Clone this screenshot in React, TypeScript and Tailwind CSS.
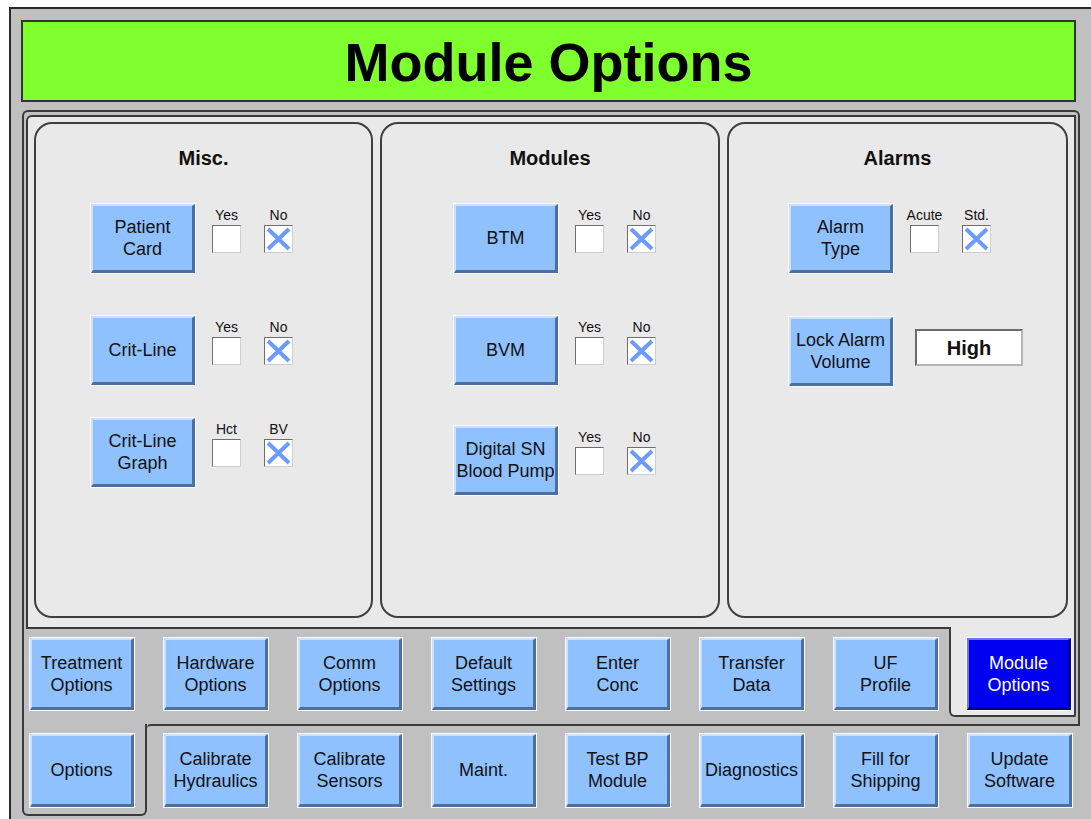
import React from "react";

const FONT = { fontFamily: '"Liberation Sans", Arial, sans-serif' };

function Btn({ lines, selected = false, h = "h-[71px]" }: { lines: string[]; selected?: boolean; h?: string }) {
  return (
    <div className={`w-[106px] ${h} shrink-0 border border-[#f7faff] flex`}>
      <div
        className={`flex-1 flex flex-col items-center justify-center text-center border-t-2 border-l-2 border-b-[3px] border-r-[3px] text-[18px] leading-[22px] ${
          selected
            ? "bg-[#0000f0] border-t-[#7070ff] border-l-[#7070ff] border-b-[#000080] border-r-[#000080] text-white"
            : "bg-[#8fc1ff] border-t-[#cbe2ff] border-l-[#cbe2ff] border-b-[#4f6e9a] border-r-[#4f6e9a] text-[#121212]"
        }`}
      >
        {lines.map((l) => (
          <div key={l} className="whitespace-nowrap">{l}</div>
        ))}
      </div>
    </div>
  );
}

function Check({ label, checked = false, first = false }: { label: string; checked?: boolean; first?: boolean }) {
  return (
    <div className={`w-[29px] shrink-0 flex flex-col items-center mt-[4px] ${first ? "ml-[16px]" : "ml-[23px]"}`}>
      <div className="h-[16px] text-[14px] leading-[16px] text-[#111] whitespace-nowrap">{label}</div>
      <div className="mt-[2px] w-[29px] h-[28px] bg-white border border-t-[#6e6e6e] border-l-[#6e6e6e] border-b-[#cfcfcf] border-r-[#cfcfcf]">
        {checked && (
          <svg viewBox="0 0 27 26" preserveAspectRatio="none" className="w-full h-full">
            <path d="M3 3 L24 23 M24 3 L3 23" stroke="#6b9bff" strokeWidth="4" />
          </svg>
        )}
      </div>
    </div>
  );
}

const row1 = [
  ["Treatment", "Options"],
  ["Hardware", "Options"],
  ["Comm", "Options"],
  ["Default", "Settings"],
  ["Enter", "Conc"],
  ["Transfer", "Data"],
  ["UF", "Profile"],
];

const row2 = [
  ["Calibrate", "Hydraulics"],
  ["Calibrate", "Sensors"],
  ["Maint."],
  ["Test BP", "Module"],
  ["Diagnostics"],
  ["Fill for", "Shipping"],
  ["Update", "Software"],
];

export default function App() {
  return (
    <div className="w-full h-[819px] bg-white overflow-hidden" style={FONT}>
      <div className="ml-[9px] mt-[7px] h-[812px] border-l-2 border-t-2 border-[#2a2a2a] bg-[#c0c0c0]">
        {/* banner */}
        <div className="ml-[10px] mt-[11px] w-[1055px] h-[82px] border-2 border-[#333] bg-[#80ff2f] flex items-center justify-center">
          <div className="text-[54px] leading-[60px] font-bold text-black pt-[2px]">Module Options</div>
        </div>

        {/* outer tab panel */}
        <div className="ml-[11px] mt-[8px] w-[1058px] border-l-2 border-t-2 border-r-2 border-[#3a3a3a] rounded-t-[6px] px-[2px] pt-[3px]">
          <div className="h-[512px] border-l-2 border-t-2 border-r-2 border-[#3a3a3a] rounded-tl-[6px] bg-[#e9e9e9] pt-[5px] px-[6px] grid grid-cols-[339px_340px_341px] gap-[7px] items-start">
            {/* Misc */}
            <div className="h-[496px] rounded-[18px] border-2 border-[#3f3f3f] flex flex-col pt-[22px]">
              <div className="text-[20px] leading-[24px] font-bold text-center text-[#111]">Misc.</div>
              <div className="pl-[54px] flex flex-col">
                <div className="mt-[33px] flex items-start">
                  <Btn lines={["Patient", "Card"]} />
                  <Check label="Yes" first />
                  <Check label="No" checked />
                </div>
                <div className="mt-[41px] flex items-start">
                  <Btn lines={["Crit-Line"]} />
                  <Check label="Yes" first />
                  <Check label="No" checked />
                </div>
                <div className="mt-[31px] flex items-start">
                  <Btn lines={["Crit-Line", "Graph"]} />
                  <Check label="Hct" first />
                  <Check label="BV" checked />
                </div>
              </div>
            </div>

            {/* Modules */}
            <div className="h-[496px] rounded-[18px] border-2 border-[#3f3f3f] flex flex-col pt-[22px]">
              <div className="text-[20px] leading-[24px] font-bold text-center text-[#111]">Modules</div>
              <div className="pl-[71px] flex flex-col">
                <div className="mt-[33px] flex items-start">
                  <Btn lines={["BTM"]} />
                  <Check label="Yes" first />
                  <Check label="No" checked />
                </div>
                <div className="mt-[41px] flex items-start">
                  <Btn lines={["BVM"]} />
                  <Check label="Yes" first />
                  <Check label="No" checked />
                </div>
                <div className="mt-[39px] flex items-start">
                  <Btn lines={["Digital SN", "Blood Pump"]} />
                  <Check label="Yes" first />
                  <Check label="No" checked />
                </div>
              </div>
            </div>

            {/* Alarms */}
            <div className="h-[496px] rounded-[18px] border-2 border-[#3f3f3f] flex flex-col pt-[22px]">
              <div className="text-[20px] leading-[24px] font-bold text-center text-[#111]">Alarms</div>
              <div className="pl-[59px] flex flex-col">
                <div className="mt-[33px] flex items-start">
                  <Btn lines={["Alarm", "Type"]} />
                  <Check label="Acute" first />
                  <Check label="Std." checked />
                </div>
                <div className="mt-[42px] flex items-start">
                  <Btn lines={["Lock Alarm", "Volume"]} />
                  <div className="ml-[21px] mt-[13px] w-[108px] h-[37px] bg-white border-2 border-t-[#6a6a6a] border-l-[#6a6a6a] border-b-[#b4b4b4] border-r-[#b4b4b4] flex items-center justify-center text-[20px] font-bold text-[#111]">
                    High
                  </div>
                </div>
              </div>
            </div>
          </div>

          {/* first tab row */}
          <div className="flex items-start">
            <div className="w-[923px] h-[97px] border-t-2 border-[#3a3a3a] pl-[3px] pt-[8px] flex gap-[28px]">
              {row1.map((l) => (
                <Btn key={l.join()} lines={l} h="h-[74px]" />
              ))}
            </div>
            <div className="w-[127px] border-l-2 border-r-2 border-b-2 border-[#3a3a3a] rounded-bl-[6px] rounded-br-[2px] bg-[#e9e9e9] pl-[15px] pr-[2px] pt-[10px] pb-[4px]">
              <Btn lines={["Module", "Options"]} selected h="h-[74px]" />
            </div>
          </div>
        </div>

        {/* second tab row */}
        <div className="ml-[11px] flex items-start">
          <div className="w-[125px] border-l-2 border-r-2 border-b-2 border-[#3a3a3a] rounded-b-[6px] pl-[5px] pt-[9px] pb-[6px]">
            <Btn lines={["Options"]} h="h-[75px]" />
          </div>
          <div className="w-[933px] border-t-2 border-[#3a3a3a] rounded-tl-[4px] pl-[16px] pt-[7px] flex gap-[28px]">
            {row2.map((l) => (
              <Btn key={l.join()} lines={l} h="h-[75px]" />
            ))}
          </div>
        </div>
      </div>
    </div>
  );
}
